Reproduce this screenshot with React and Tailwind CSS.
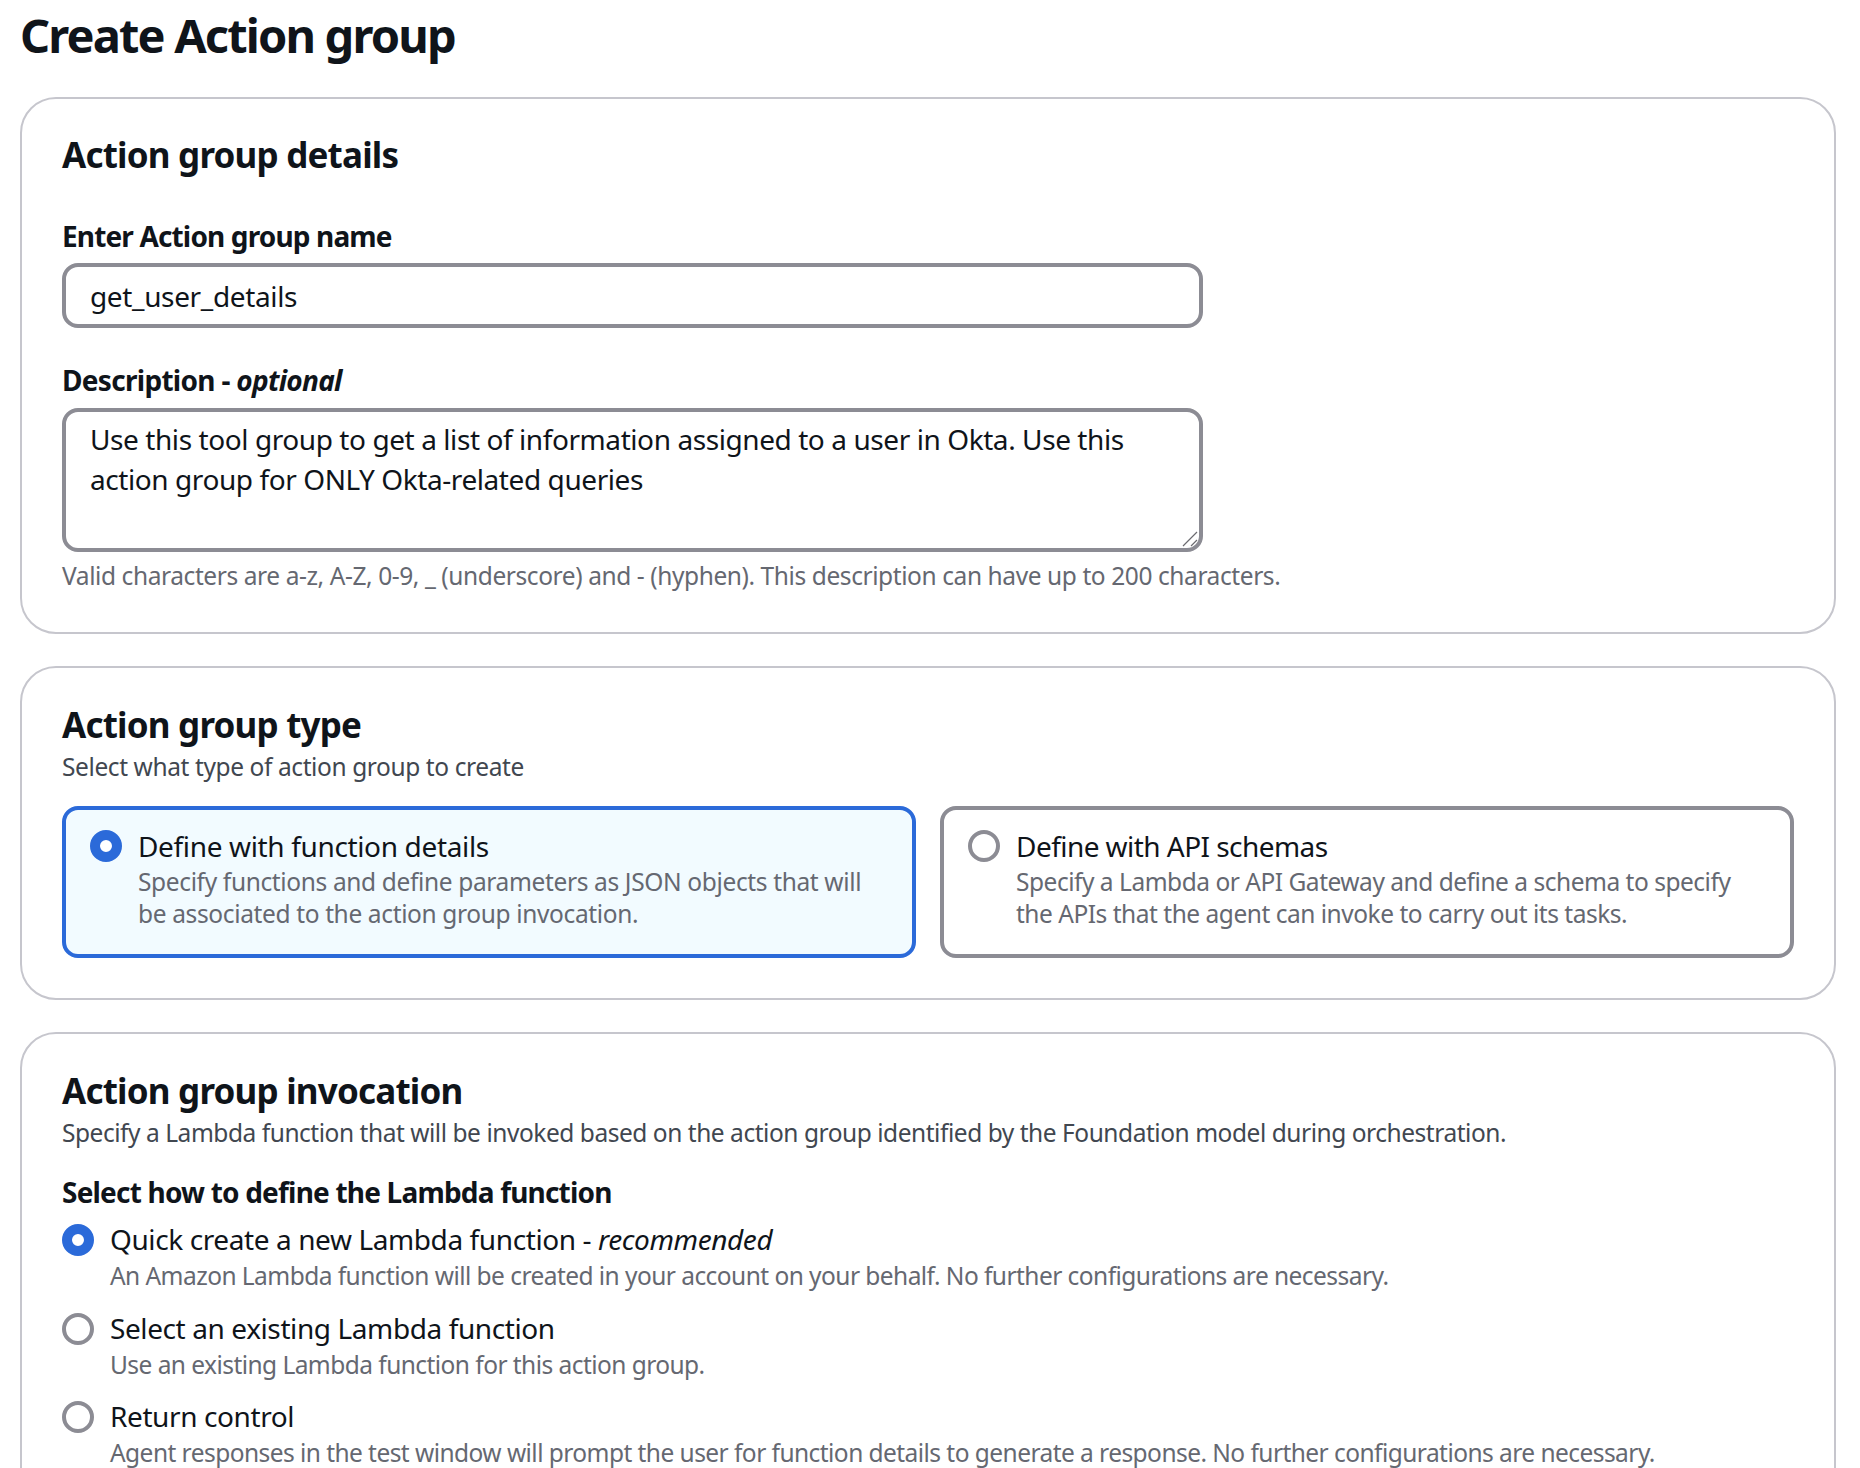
import React from 'react';

const Radio = ({ checked }) => (
  <span
    className={`block w-8 h-8 rounded-full flex-shrink-0 ${checked ? 'border-[10px] border-[#2b6ad9] bg-white' : 'border-4 border-[#8c8c94] bg-white'}`}
  />
);

const Tile = ({ checked, title, desc }) => (
  <div className={`flex-1 h-[152px] rounded-2xl border-4 pl-6 pt-[16px] flex gap-4 ${checked ? 'border-[#2b6ad9] bg-[#f2fbff]' : 'border-[#8c8c94] bg-white'}`}>
    <div className="pt-[4px]"><Radio checked={checked} /></div>
    <div>
      <div className={`text-[28px] leading-[40px] text-[#0f141a] ${checked ? 'tracking-[-0.35px]' : 'tracking-[-0.55px]'}`}>{title}</div>
      <div className={`text-[24.5px] leading-[32px] text-[#656871] whitespace-pre-line ${checked ? 'tracking-[-0.36px]' : 'tracking-[-0.48px]'}`}>{desc}</div>
    </div>
  </div>
);

const Option = ({ checked, title, em, desc }) => (
  <div className="flex gap-4 h-[88.5px]">
    <div className="pt-[5px]"><Radio checked={checked} /></div>
    <div>
      <div className="text-[28px] leading-[40px] tracking-[-0.4px] text-[#0f141a]">
        {title}{em && <> - <em>{em}</em></>}
      </div>
      <div className="mt-[1px] text-[24.5px] leading-[32px] tracking-[-0.55px] text-[#656871] whitespace-nowrap">{desc}</div>
    </div>
  </div>
);

const Card = ({ className, children }) => (
  <section className={`rounded-[36px] border-2 border-[#c6c6cd] bg-white px-[40px] ${className}`}>
    {children}
  </section>
);

export default function App() {
  return (
    <div className="h-[1468px] overflow-hidden bg-white pl-[20px] pr-[24px] font-['Noto_Sans','Open_Sans',sans-serif] text-[#0f141a]">
      <h1 className="pt-[5px] text-[47px] leading-[60px] font-bold tracking-[-1.85px] mb-[32px]">Create Action group</h1>

      <Card className="h-[537px] pt-[34px] mb-[32px]">
        <h2 className="text-[35px] leading-[44px] font-bold tracking-[-0.8px] mb-[39px]">Action group details</h2>
        <label className="block text-[28px] leading-[40px] font-bold tracking-[-0.85px] mb-[7px]">Enter Action group name</label>
        <input
          readOnly
          value="get_user_details"
          className="block w-[1141px] h-[65px] rounded-2xl border-4 border-[#8c8c94] px-6 text-[28px] tracking-[-0.35px] text-[#0f141a] outline-none mb-[32px]"
        />
        <label className="block text-[28px] leading-[40px] font-bold tracking-[-0.7px] mb-[8px]">Description - <em>optional</em></label>
        <div className="relative w-[1141px] h-[144px] mb-[8px]">
          <textarea
            readOnly
            defaultValue={'Use this tool group to get a list of information assigned to a user in Okta. Use this action group for ONLY Okta-related queries'}
            className="block w-full h-full resize-none rounded-2xl border-4 border-[#8c8c94] px-6 py-[7px] text-[28px] leading-[40px] tracking-[-0.42px] text-[#0f141a] outline-none"
          />
          <svg className="absolute right-[5px] bottom-[5px] w-4 h-4" viewBox="0 0 16 16" fill="none" stroke="#6b6b70" strokeWidth="1.2">
            <path d="M1 15 15 1M9 15l6-6" />
          </svg>
        </div>
        <p className="text-[24.5px] leading-[32px] tracking-[-0.41px] text-[#656871]">Valid characters are a-z, A-Z, 0-9, _ (underscore) and - (hyphen). This description can have up to 200 characters.</p>
      </Card>

      <Card className="h-[334px] pt-[35px] mb-[32px]">
        <h2 className="text-[35px] leading-[44px] font-bold tracking-[-0.8px] mb-[4px]">Action group type</h2>
        <p className="text-[24.5px] leading-[32px] tracking-[-0.4px] text-[#414750] mb-[23px]">Select what type of action group to create</p>
        <div className="flex gap-[24px]">
          <Tile checked title="Define with function details" desc={'Specify functions and define parameters as JSON objects that will\nbe associated to the action group invocation.'} />
          <Tile title="Define with API schemas" desc={'Specify a Lambda or API Gateway and define a schema to specify\nthe APIs that the agent can invoke to carry out its tasks.'} />
        </div>
      </Card>

      <Card className="h-[500px] pt-[35px]">
        <h2 className="text-[35px] leading-[44px] font-bold tracking-[-0.8px] mb-[4px]">Action group invocation</h2>
        <p className="text-[24.5px] leading-[32px] tracking-[-0.46px] text-[#414750] mb-[23px]">Specify a Lambda function that will be invoked based on the action group identified by the Foundation model during orchestration.</p>
        <div className="text-[28px] leading-[40px] font-bold tracking-[-0.8px] mb-[7px]">Select how to define the Lambda function</div>
        <Option checked title="Quick create a new Lambda function" em="recommended" desc="An Amazon Lambda function will be created in your account on your behalf. No further configurations are necessary." />
        <Option title="Select an existing Lambda function" desc="Use an existing Lambda function for this action group." />
        <Option title="Return control" desc="Agent responses in the test window will prompt the user for function details to generate a response. No further configurations are necessary." />
      </Card>
    </div>
  );
}
